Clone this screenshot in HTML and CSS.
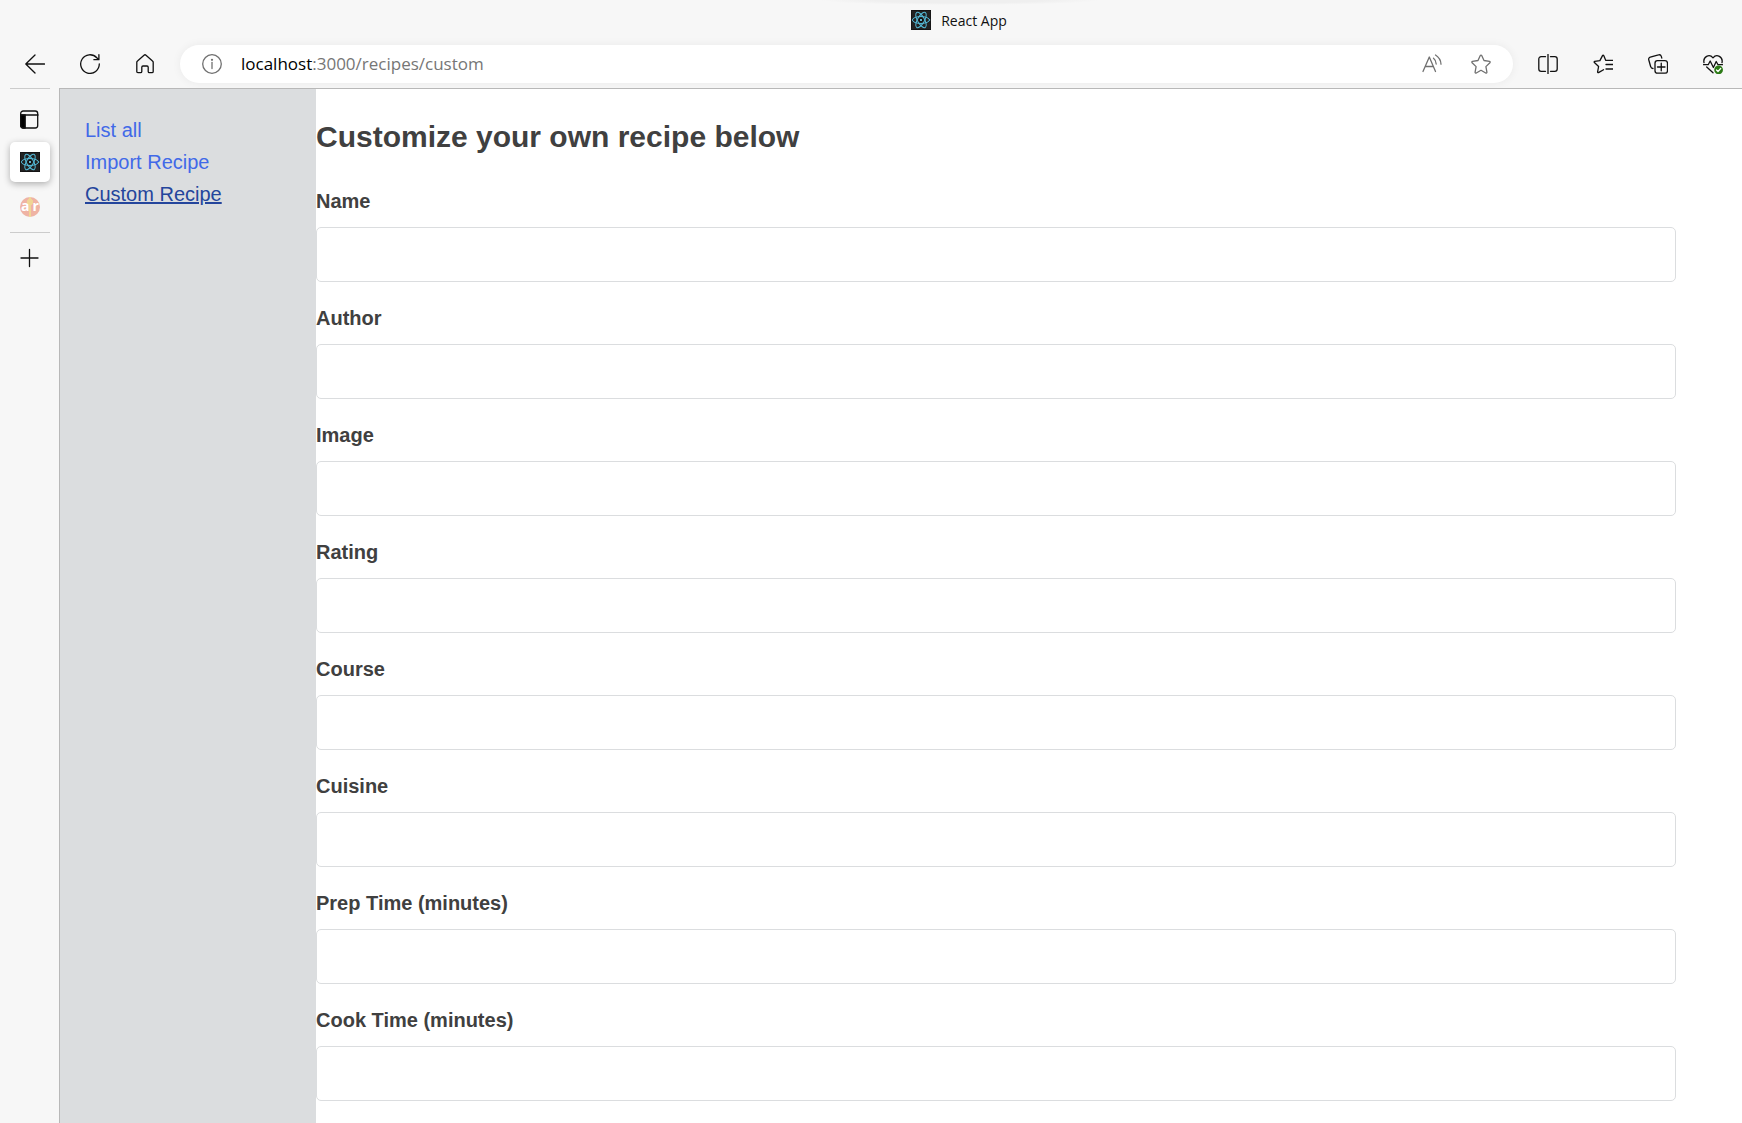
FILE: index.html
```html
<!DOCTYPE html>
<html lang="en">
<head>
<meta charset="utf-8">
<title>React App</title>
<link rel="stylesheet" href="styles.css">
</head>
<body>
<svg class="defs" width="0" height="0" aria-hidden="true">
  <symbol id="react" viewBox="0 0 20 20">
    <rect width="20" height="20" rx="2" fill="#222"/>
    <g fill="none" stroke="#53b9d6" stroke-width="1">
      <ellipse cx="10" cy="10" rx="8.600" ry="3.500"/>
      <ellipse cx="10" cy="10" rx="8.600" ry="3.500" transform="rotate(60 10 10)"/>
      <ellipse cx="10" cy="10" rx="8.600" ry="3.500" transform="rotate(120 10 10)"/>
    </g>
    <circle cx="10" cy="10" r="1.700" fill="#7fe0fa"/>
  </symbol>
</svg>

<header class="chrome">
  <div class="titlebar">
    <svg class="icon"><use href="#react"/></svg>
    <span>React App</span>
  </div>
  <div class="toolbar">
    <div class="group">
      <button class="tool" aria-label="Back"><svg class="icon" viewBox="0 0 20 20"><path d="M19.500 10H.8M10 1L.8 10l9.200 9"/></svg></button>
      <button class="tool" aria-label="Refresh"><svg class="icon" viewBox="0 0 20 20"><path d="M19.300 10A9.300 9.300 0 1 1 16.800 3.700l1.800 1.900M18.900 .7v5h-5"/></svg></button>
      <button class="tool" aria-label="Home"><svg class="icon" viewBox="0 0 20 20"><path d="M1.800 8.300c0-.6.200-1 .7-1.400L9 1.200c.6-.5 1.400-.5 2 0l6.500 5.700c.5.400.7.800.7 1.400v9.200c0 .8-.4 1.200-1.200 1.200h-2.600c-.8 0-1.200-.4-1.200-1.200v-4.300c0-.8-.4-1.200-1.200-1.200H8c-.8 0-1.200.4-1.200 1.200v4.300c0 .8-.4 1.200-1.200 1.200H3c-.8 0-1.200-.4-1.200-1.200z"/></svg></button>
    </div>
    <div class="address">
      <button class="tool muted" aria-label="Site information"><svg class="icon" viewBox="0 0 20 20"><circle cx="10" cy="10" r="9.300"/><path d="M10 8.500v6"/><circle cx="10" cy="5.800" r=".5"/></svg></button>
      <div class="url">localhost<span class="path">:3000/recipes/custom</span></div>
      <button class="tool muted" aria-label="Read aloud"><svg class="icon" viewBox="0 0 20 20"><path d="M1 17.500L7.300 3l6.200 14.500M3.200 12.500h8.200M11.500 4.200c1.800 1.400 2.600 3.200 2.700 5.800M13.500 1c3.500 2.200 5.300 5.200 5.500 9.200"/></svg></button>
      <button class="tool muted" aria-label="Add to favorites"><svg class="icon" viewBox="0 0 20 20"><path d="M9.300 1.500c.3-.6 1.100-.6 1.400 0l2.300 5 5.500.8c.7.100.9.900.4 1.400l-4 3.900 1 5.500c.1.700-.6 1.200-1.200.9L10 16.300 5.300 19c-.6.300-1.300-.2-1.200-.9l1-5.500-4-3.900c-.5-.5-.3-1.300.4-1.400L7 6.500z"/></svg></button>
    </div>
    <div class="group">
      <button class="tool" aria-label="Split screen"><svg class="icon" viewBox="0 0 20 20"><path d="M7.500 2.700H3.200c-1.500 0-2.400.9-2.400 2.400v9.800c0 1.500.9 2.400 2.400 2.400h4.300M12.500 2.700h4.300c1.500 0 2.400.9 2.400 2.400v9.800c0 1.500-.9 2.400-2.400 2.400h-4.300M10 .3v19.400"/></svg></button>
      <button class="tool" aria-label="Favorites"><svg class="icon" viewBox="0 0 20 20"><path d="M10.500 15.700l-5 2.900c-.5.300-1-.1-.9-.7l1-5.400-4.200-4c-.5-.4-.3-1 .3-1.100l5.200-.8 2.600-5c.3-.6.900-.6 1.200 0l2.100 4.800H20M13 10.500h7M13 15h7"/></svg></button>
      <button class="tool" aria-label="Collections"><svg class="icon" viewBox="0 0 20 20"><path d="M5 14.500c-1.200 0-2-.6-2.300-1.800L.8 6C.4 4.700 1 3.600 2.300 3.200L10.500.9c1.300-.4 2.400.2 2.800 1.500l.5 1.700"/><rect x="7" y="6.700" width="12.500" height="12.500" rx="2.500"/><path d="M13.250 9.200v7.600M9.500 13h7.500"/></svg></button>
      <button class="tool" aria-label="Browser essentials"><svg class="icon" viewBox="0 0 20 20"><path d="M1 8.700C-.2 3 6.200-.7 10 3.800 13.800-.7 20.200 3 19 8.700M.5 10.700h4.700l2-3.700 3.200 6.500 2.800-6 1.800 3.200h4.500M3.700 13L10 18.800"/><circle cx="15.600" cy="15.800" r="4.400" fill="#2c7a16" stroke="none"/><path d="M13.500 16l1.500 1.500 2.700-3" stroke="#fff"/></svg></button>
    </div>
  </div>
</header>

<div class="window">
  <aside class="tabs">
    <button class="tab first" aria-label="Tab actions"><svg class="icon" viewBox="0 0 20 20"><rect x=".7" y="1" width="17" height="17" rx="2.500"/><path d="M1 5h17"/><path d="M.7 5h4.500v13H3.200c-1.500 0-2.500-1-2.500-2.500z" fill="#000"/></svg></button>
    <button class="tab active" aria-label="React App"><svg class="icon"><use href="#react"/></svg></button>
    <button class="tab" aria-label="Allrecipes"><span class="ar"><span>a</span><span>r</span></span></button>
    <hr class="rule">
    <button class="tab" aria-label="New tab"><svg class="icon" viewBox="0 0 20 20"><path d="M9.500 1.500v17M1 10h17"/></svg></button>
  </aside>

  <div class="page">
    <nav class="sidebar">
      <a href="#">List all</a>
      <a href="#">Import Recipe</a>
      <a href="#" class="current">Custom Recipe</a>
    </nav>
    <main class="content">
      <h1>Customize your own recipe below</h1>
      <form class="form">
        <div class="field"><label for="name">Name</label><input id="name" type="text"></div>
        <div class="field"><label for="author">Author</label><input id="author" type="text"></div>
        <div class="field"><label for="image">Image</label><input id="image" type="text"></div>
        <div class="field"><label for="rating">Rating</label><input id="rating" type="text"></div>
        <div class="field"><label for="course">Course</label><input id="course" type="text"></div>
        <div class="field"><label for="cuisine">Cuisine</label><input id="cuisine" type="text"></div>
        <div class="field"><label for="prep">Prep Time (minutes)</label><input id="prep" type="text"></div>
        <div class="field"><label for="cook">Cook Time (minutes)</label><input id="cook" type="text"></div>
      </form>
    </main>
  </div>
</div>
</body>
</html>
```
FILE: styles.css
```css
* {
  box-sizing: border-box;
}

body {
  margin: 0;
  min-height: 100vh;
  display: flex;
  flex-direction: column;
  background: #f7f7f7;
  color: #404040;
  font-family: "Liberation Sans", Arial, sans-serif;
  font-size: 20px;
}

.defs {
  position: absolute;
}

button {
  padding: 0;
  border: 0;
  background: none;
  cursor: pointer;
}

.icon {
  display: block;
  width: 20px;
  height: 20px;
  fill: none;
  stroke: #111;
  stroke-width: 1.3;
  stroke-linecap: round;
  stroke-linejoin: round;
}

.muted .icon {
  stroke: #707070;
}

/* Browser chrome */
.chrome {
  color: #111;
  font-family: "Open Sans", "Noto Sans", sans-serif;
}

.titlebar {
  display: flex;
  align-items: center;
  justify-content: center;
  gap: 10px;
  height: 40px;
  padding-left: 176px;
  background: radial-gradient(140px 5px at 960px 0, #efefef 60%, transparent);
  font-size: 14px;
}

.toolbar {
  display: flex;
  align-items: center;
  gap: 25px;
  height: 48px;
  padding: 0 19px 0 25px;
}

.group {
  display: flex;
  gap: 35px;
}

.address {
  flex: 1;
  display: flex;
  align-items: center;
  gap: 29px;
  height: 38px;
  padding: 0 22px;
  border-radius: 19px;
  background: #fff;
  box-shadow: 0 0 10px rgba(0, 0, 0, 0.06);
}

.url {
  flex: 1;
  margin-left: -10px;
  font-size: 17px;
  line-height: 24px;
  color: #000;
}

.path {
  color: #767676;
}

/* Vertical tab strip */
.window {
  flex: 1;
  display: flex;
}

.tabs {
  width: 59px;
  padding: 0 9px 0 10px;
}

.tab {
  display: flex;
  align-items: center;
  justify-content: center;
  width: 40px;
  height: 50px;
}

.first {
  height: 54px;
  padding-top: 8px;
  border-top: 1px solid #ccc;
}

.active {
  height: 40px;
  border-radius: 5px;
  background: #fff;
  box-shadow: 0 2px 7px rgba(0, 0, 0, 0.3);
}

.ar {
  display: flex;
  justify-content: center;
  gap: 3px;
  width: 20px;
  height: 20px;
  border-radius: 50%;
  background: radial-gradient(3px 4px at 50% 5px, #f0d595 90%, transparent), linear-gradient(90deg, transparent 9px, #f0d595 9px, #f0d595 11px, transparent 11px) #efb3a4;
  color: #fff;
  font: bold 14px/18px "Open Sans", sans-serif;
}

.rule {
  height: 1px;
  margin: 0;
  border: 0;
  background: #ccc;
}

/* Recipe app */
.page {
  flex: 1;
  display: flex;
  border-top: 1px solid #b8b8b8;
  border-left: 1px solid #b8b8b8;
  background: #fff;
}

.sidebar {
  display: flex;
  flex-direction: column;
  width: 256px;
  padding: 25px;
  background: #dbdddf;
  line-height: 32px;
}

.sidebar a {
  color: #4169e8;
  text-decoration: none;
}

.sidebar .current {
  color: #24459c;
  text-decoration: underline;
  text-decoration-thickness: 2px;
}

.content {
  flex: 1;
  padding: 30px 66px 20px 0;
}

h1 {
  margin: 0 0 34px;
  font-size: 30px;
  line-height: 36px;
}

.form {
  display: flex;
  flex-direction: column;
  gap: 24px;
}

.field {
  display: flex;
  flex-direction: column;
  gap: 14px;
}

label {
  font-weight: bold;
  line-height: 24px;
}

input {
  width: 100%;
  height: 55px;
  padding: 0 16px;
  border: 1px solid #dbdddf;
  border-radius: 5px;
  background: #fff;
  color: inherit;
  font: inherit;
}
```
